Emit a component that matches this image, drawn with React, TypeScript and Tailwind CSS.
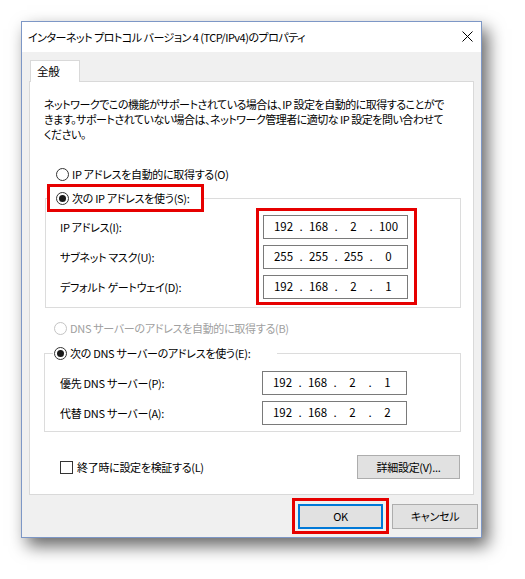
import React from 'react';

const font = "font-['Noto_Sans_CJK_JP','Noto_Sans',sans-serif] [font-feature-settings:'palt']";

const Radio = ({ checked, disabled }: { checked?: boolean; disabled?: boolean }) => (
  <span
    className={`flex h-[13px] w-[13px] shrink-0 items-center justify-center rounded-full border bg-white ${
      disabled ? 'border-[#c4c4c4]' : 'border-[#333]'
    }`}
  >
    {checked && <span className="h-[7px] w-[7px] rounded-full bg-[#1a1a1a]" />}
  </span>
);

const IpBox = ({ parts }: { parts: string[] }) => (
  <div className="flex h-[24px] w-[145px] items-center border border-[#7a7a7a] bg-white pl-[5px] text-[11.5px] tracking-normal text-black">
    {parts.map((p, i) => (
      <React.Fragment key={i}>
        <span className="w-[29px] text-center">{p}</span>
        {i < 3 && <span className="w-[6px] text-center">.</span>}
      </React.Fragment>
    ))}
  </div>
);

const Label = ({ children }: { children: React.ReactNode }) => (
  <div className="flex h-[24px] items-center whitespace-nowrap">{children}</div>
);

export default function App() {
  return (
    <div className={`min-h-[579px] bg-white pl-[21px] pt-[21px] text-[11px] tracking-[-0.3px] text-black ${font}`}>
      <div className="flex h-[517px] w-[461px] flex-col overflow-hidden border border-[#7d97c6] bg-[#f0f0f0] shadow-[6px_8px_16px_rgba(0,0,0,0.6)]">
        {/* title bar */}
        <div className="flex h-[30px] shrink-0 items-center justify-between bg-white pl-[6px] pr-[8px]">
          <span className="whitespace-nowrap tracking-[-0.5px]">インターネット プロトコル バージョン 4 (TCP/IPv4)のプロパティ</span>
          <svg width="11" height="11" viewBox="0 0 11 11" className="mt-[-1px]">
            <path d="M0.5 0.5 L10.5 10.5 M10.5 0.5 L0.5 10.5" stroke="#000" strokeWidth="1" />
          </svg>
        </div>

        {/* body */}
        <div className="flex flex-1 flex-col pt-[8px]">
          <div className="relative z-10 ml-[8px] -mb-px flex h-[22px] w-[50px] items-center border border-b-0 border-[#d9d9d9] bg-white pl-[6px] text-[11.5px]">
            全般
          </div>

          <div className="mx-[7px] flex h-[414px] flex-col border border-[#d9d9d9] bg-white">
            <p className="whitespace-nowrap pl-[14px] pt-[15px] leading-[15px] tracking-[-0.5px]">
              ネットワークでこの機能がサポートされている場合は、IP 設定を自動的に取得することがで
              <br />
              きます。サポートされていない場合は、ネットワーク管理者に適切な IP 設定を問い合わせて
              <br />
              ください。
            </p>

            <div className="mt-[22px] flex h-[20px] items-center gap-[3px] pl-[26px]">
              <Radio />
              <span>IP アドレスを自動的に取得する(O)</span>
            </div>

            <fieldset className="ml-[15px] w-[416px] border border-[#dcdcdc] pb-[2px]">
              <legend className="ml-[1px] flex h-[28px] w-[157px] items-center gap-[3px] border-[3px] border-[#e60000] pl-[6px]">
                <Radio checked />
                <span className="whitespace-nowrap">次の IP アドレスを使う(S):</span>
              </legend>
              <div className="-mt-[4px] flex">
                <div className="flex w-[210px] flex-col gap-[6px] pl-[14px] pt-[7px]">
                  <Label>IP アドレス(I):</Label>
                  <Label>サブネット マスク(U):</Label>
                  <Label>デフォルト ゲートウェイ(D):</Label>
                </div>
                <div className="flex flex-col gap-[6px] border-[3px] border-[#e60000] pb-[3px] pl-[4px] pr-[6px] pt-[4px]">
                  <IpBox parts={['192', '168', '2', '100']} />
                  <IpBox parts={['255', '255', '255', '0']} />
                  <IpBox parts={['192', '168', '2', '1']} />
                </div>
              </div>
            </fieldset>

            <div className="mt-[10px] flex h-[20px] items-center gap-[3px] pl-[24px] text-[#a0a0a0]">
              <Radio disabled />
              <span>DNS サーバーのアドレスを自動的に取得する(B)</span>
            </div>

            <fieldset className="ml-[14px] mt-[5px] w-[417px] border border-[#dcdcdc] pb-[6px]">
              <legend className="ml-[8px] flex h-[20px] w-[224px] items-center gap-[3px] pl-[1px]">
                <Radio checked />
                <span className="whitespace-nowrap">次の DNS サーバーのアドレスを使う(E):</span>
              </legend>
              <div className="flex pt-[8px]">
                <div className="flex w-[217px] flex-col gap-[6px] pl-[15px]">
                  <Label>優先 DNS サーバー(P):</Label>
                  <Label>代替 DNS サーバー(A):</Label>
                </div>
                <div className="flex flex-col gap-[6px]">
                  <IpBox parts={['192', '168', '2', '1']} />
                  <IpBox parts={['192', '168', '2', '2']} />
                </div>
              </div>
            </fieldset>

            <div className="mt-[23px] flex items-center justify-between pl-[30px] pr-[13px]">
              <div className="flex items-center gap-[4px]">
                <span className="h-[13px] w-[13px] border border-[#333] bg-white" />
                <span>終了時に設定を検証する(L)</span>
              </div>
              <button className="flex h-[24px] w-[103px] items-center justify-center border border-[#adadad] bg-[#e1e1e1]">
                詳細設定(V)...
              </button>
            </div>
          </div>

          {/* footer */}
          <div className="mt-[3px] flex items-center justify-end gap-[3px] pr-[3px]">
            <div className="border-[3px] border-[#e60000] px-[3px] pb-[2px] pt-[3px]">
              <button className="flex h-[25px] w-[85px] items-center justify-center border-2 border-[#0078d7] bg-[#e1e1e1]">
                OK
              </button>
            </div>
            <button className="flex h-[25px] w-[86px] items-center justify-center border border-[#adadad] bg-[#e1e1e1]">
              キャンセル
            </button>
          </div>
        </div>
      </div>
    </div>
  );
}
